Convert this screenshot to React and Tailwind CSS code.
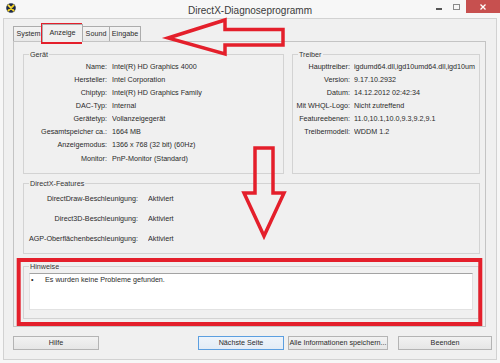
function DxIcon() {
  return (
    <svg width="10" height="10" viewBox="0 0 10 10">
      <circle cx="5" cy="5" r="4.8" fill="#1d2a4a" />
      <path d="M2.4 2.4 L7.6 7.6 M7.6 2.4 L2.4 7.6" stroke="#f2d024" strokeWidth="2" strokeLinecap="round" />
      <path d="M2.8 2.6 L5 4.6" stroke="#fff7b0" strokeWidth="0.7" strokeLinecap="round" />
    </svg>
  );
}

function Group({ title, className, children }) {
  return (
    <fieldset className={"border border-[#d3d3d3] min-w-0 " + className}>
      <legend className="ml-[5px] px-[1px] leading-[9px] text-[#333]">{title}</legend>
      {children}
    </fieldset>
  );
}

function Rows({ rows, labelW, gap, lh }) {
  return (
    <div
      className="grid"
      style={{ gridTemplateColumns: `${labelW}px minmax(0,1fr)`, columnGap: `${gap}px` }}
    >
      {rows.map(([l, v]) => (
        <div key={l} className="contents">
          <div className="text-right whitespace-nowrap" style={{ lineHeight: `${lh}px` }}>{l}</div>
          <div className="whitespace-nowrap overflow-hidden" style={{ lineHeight: `${lh}px` }}>{v}</div>
        </div>
      ))}
    </div>
  );
}

function Btn({ children, w, def }) {
  return (
    <div
      className={
        "h-[14px] flex items-center justify-center border " +
        (def
          ? "border-[#5c9fe0] bg-gradient-to-b from-[#eef4fb] to-[#e3ecf6]"
          : "border-[#b4b4b4] bg-gradient-to-b from-[#f2f2f2] to-[#e6e6e6]")
      }
      style={{ width: w }}
    >
      {children}
    </div>
  );
}

export default function App() {
  const geraet = [
    ["Name:", "Intel(R) HD Graphics 4000"],
    ["Hersteller:", "Intel Corporation"],
    ["Chiptyp:", "Intel(R) HD Graphics Family"],
    ["DAC-Typ:", "Internal"],
    ["Gerätetyp:", "Vollanzeigegerät"],
    ["Gesamtspeicher ca.:", "1664 MB"],
    ["Anzeigemodus:", "1366 x 768 (32 bit) (60Hz)"],
    ["Monitor:", "PnP-Monitor (Standard)"],
  ];
  const treiber = [
    ["Haupttreiber:", "igdumd64.dll,igd10umd64.dll,igd10um"],
    ["Version:", "9.17.10.2932"],
    ["Datum:", "14.12.2012 02:42:34"],
    ["Mit WHQL-Logo:", "Nicht zutreffend"],
    ["Featureebenen:", "11.0,10.1,10.0,9.3,9.2,9.1"],
    ["Treibermodell:", "WDDM 1.2"],
  ];
  const features = [
    ["DirectDraw-Beschleunigung:", "Aktiviert"],
    ["Direct3D-Beschleunigung:", "Aktiviert"],
    ["AGP-Oberflächenbeschleunigung:", "Aktiviert"],
  ];

  return (
    <div className="relative w-[500px] h-[363px] overflow-hidden bg-[#f7f7f7] font-['Liberation_Sans',Arial,sans-serif] text-[7.2px] text-[#2a2a2a]">
      {/* Title bar */}
      <div className="grid grid-cols-[100px_1fr_100px] h-[18px]">
        <div className="flex items-start pl-[6px] pt-[3px]">
          <DxIcon />
        </div>
        <div className="flex items-center justify-center pt-[2px] text-[10px] text-[#3a3a3a] whitespace-nowrap">
          DirectX-Diagnoseprogramm
        </div>
        <div className="flex items-start justify-end">
          <div className="w-[16px] h-[13px] flex items-center justify-center pt-[5px]">
            <div className="w-[6px] h-[1.5px] bg-[#555]" />
          </div>
          <div className="w-[19px] h-[13px] flex items-center justify-center">
            <div className="w-[7px] h-[6px] border border-[#8a8a8a]" />
          </div>
          <div className="w-[34px] h-[13px] bg-[#c7504f] flex items-center justify-center">
            <svg width="6" height="6" viewBox="0 0 6 6">
              <path d="M0.5 0.5 L5.5 5.5 M5.5 0.5 L0.5 5.5" stroke="#fff" strokeWidth="1.3" />
            </svg>
          </div>
        </div>
      </div>

      {/* Window body */}
      <div className="mx-[3px] h-[342px] border-x border-b border-t border-[#d2d2d2] bg-[#f0f0f0] pl-[9px] pt-[5px]">
        {/* Tabs */}
        <div className="flex items-end h-[17px]">
          <div className="w-[31px] h-[15px] border border-b-0 border-[#acacac] bg-gradient-to-b from-[#f3f3f3] to-[#e8e8e8] flex items-center justify-center">
            System
          </div>
          <div className="relative z-10 -ml-[2px] -mb-px w-[41px] h-[18px] border border-b-0 border-[#acacac] bg-[#f0f0f0] flex items-center justify-center pb-[1px]">
            Anzeige
          </div>
          <div className="-ml-px w-[28px] h-[15px] border border-b-0 border-[#acacac] bg-gradient-to-b from-[#f3f3f3] to-[#e8e8e8] flex items-center justify-center">
            Sound
          </div>
          <div className="-ml-px w-[32px] h-[15px] border border-b-0 border-[#acacac] bg-gradient-to-b from-[#f3f3f3] to-[#e8e8e8] flex items-center justify-center">
            Eingabe
          </div>
        </div>

        {/* Panel */}
        <div className="w-[473px] h-[286px] border border-[#c4c4c4] bg-[#f0f0f0] pl-[9px] pt-[7.5px] flex flex-col">
          <div className="flex gap-[8px]">
            <Group title="Gerät" className="w-[261px] h-[124px]">
              <div className="pt-[1px]">
                <Rows rows={geraet} labelW={83} gap={5} lh={13.15} />
              </div>
            </Group>
            <Group title="Treiber" className="w-[188px] h-[124px]">
              <div className="pt-[1px]">
                <Rows rows={treiber} labelW={57} gap={4} lh={13.15} />
              </div>
            </Group>
          </div>

          <Group title="DirectX-Features" className="mt-[5px] w-[457px] h-[75px]">
            <div className="pt-[1.5px]">
              <Rows rows={features} labelW={114} gap={10} lh={20} />
            </div>
          </Group>

          <Group title="Hinweise" className="mt-[8px] w-[456px] h-[57px]">
            <div className="mx-[5px] mt-[2.5px] h-[37px] bg-white border border-[#e2e2e2] border-t-[#a3a3a3] flex pl-[1px] leading-[9px] pt-[0.5px]">
              <span className="w-[14px]">•</span>
              <span>Es wurden keine Probleme gefunden.</span>
            </div>
          </Group>
        </div>

        {/* Buttons */}
        <div className="mt-[9px] w-[479px] flex items-center">
          <Btn w={86}>Hilfe</Btn>
          <div className="flex-1" />
          <Btn w={86} def>
            Nächste Seite
          </Btn>
          <div className="w-[4px]" />
          <Btn w={100}>Alle Informationen speichern...</Btn>
          <div className="w-[10px]" />
          <Btn w={94}>Beenden</Btn>
        </div>
      </div>

      {/* Red annotations */}
      <svg className="absolute inset-0 pointer-events-none" width="500" height="363" viewBox="0 0 500 363">
        <g fill="none" stroke="#e41f2b" strokeLinejoin="miter">
          <rect x="42.5" y="24.5" width="38" height="18" strokeWidth="3" />
          <rect x="18.7" y="260" width="461.6" height="64" strokeWidth="4" />
          <polygon
            points="168,38 225,20 225,29.5 283,29.5 283,45 225,45 225,54"
            strokeWidth="3.5"
          />
          <polygon
            points="255,148 273,148 273,193 284,193 264,236 244,193 255,193"
            strokeWidth="3.5"
          />
        </g>
      </svg>
    </div>
  );
}
